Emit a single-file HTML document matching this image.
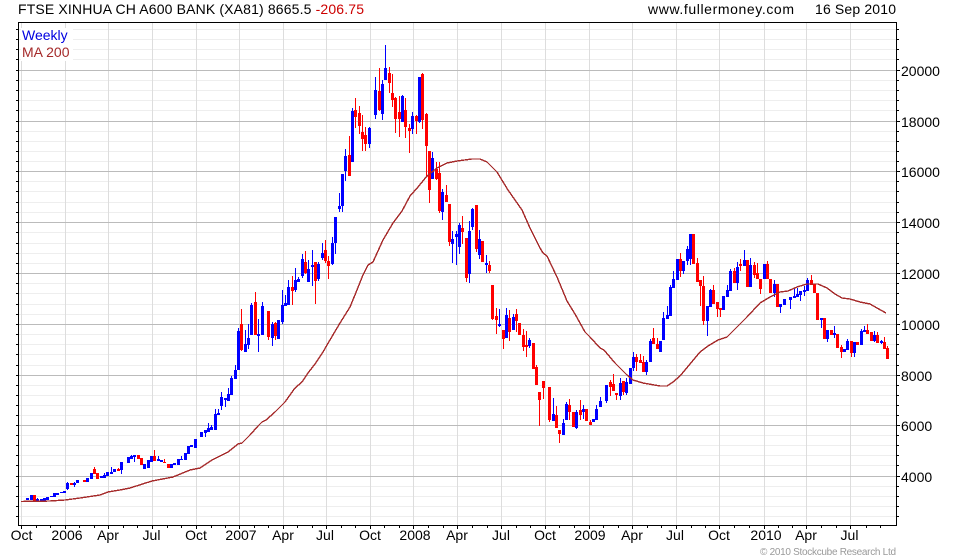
<!DOCTYPE html>
<html><head><meta charset="utf-8"><title>FTSE XINHUA CH A600 BANK</title>
<style>
html,body{margin:0;padding:0;background:#fff}
svg{display:block}
text{font-family:"Liberation Sans",Arial,sans-serif;font-size:14px;fill:#000}
.c{text-anchor:middle}
</style></head><body>
<svg xmlns="http://www.w3.org/2000/svg" width="980" height="560" viewBox="0 0 980 560">
<rect width="980" height="560" fill="#fff"/>
<g shape-rendering="crispEdges" fill="none">
<path stroke="#eee" d="M19 29.5H896M19 39.5H896M19 49.5H896M19 59.5H896M19 80.5H896M19 90.5H896M19 100.5H896M19 110.5H896M19 131.5H896M19 141.5H896M19 151.5H896M19 161.5H896M19 181.5H896M19 191.5H896M19 202.5H896M19 212.5H896M19 232.5H896M19 243.5H896M19 253.5H896M19 263.5H896M19 283.5H896M19 293.5H896M19 304.5H896M19 314.5H896M19 334.5H896M19 344.5H896M19 354.5H896M19 365.5H896M19 385.5H896M19 395.5H896M19 405.5H896M19 415.5H896M19 435.5H896M19 445.5H896M19 455.5H896M19 465.5H896M19 486.5H896M19 496.5H896M19 506.5H896M19 516.5H896"/>
<path stroke="#ddd" d="M21.5 23V525M65.5 23V525M108.5 23V525M152.5 23V525M196.5 23V525M239.5 23V525M283.5 23V525M326.5 23V525M370.5 23V525M413.5 23V525M457.5 23V525M501.5 23V525M545.5 23V525M589.5 23V525M632.5 23V525M676.5 23V525M719.5 23V525M764.5 23V525M806.5 23V525M850.5 23V525"/>
<path stroke="#bbb" d="M19 70.5H896M19 121.5H896M19 171.5H896M19 222.5H896M19 273.5H896M19 324.5H896M19 375.5H896M19 425.5H896M19 476.5H896"/>
<rect x="21" y="28" width="52" height="33" fill="#fff"/>
<path stroke="#000" d="M18 22.5H897M18.5 22V526M896.5 22V526M18 525.5H897"/>
<path stroke="#000" d="M16 29.5H18M16 39.5H18M16 49.5H18M16 59.5H18M16 70.5H18M16 80.5H18M16 90.5H18M16 100.5H18M16 110.5H18M16 121.5H18M16 131.5H18M16 141.5H18M16 151.5H18M16 161.5H18M16 171.5H18M16 181.5H18M16 191.5H18M16 202.5H18M16 212.5H18M16 222.5H18M16 232.5H18M16 243.5H18M16 253.5H18M16 263.5H18M16 273.5H18M16 283.5H18M16 293.5H18M16 304.5H18M16 314.5H18M16 324.5H18M16 334.5H18M16 344.5H18M16 354.5H18M16 365.5H18M16 375.5H18M16 385.5H18M16 395.5H18M16 405.5H18M16 415.5H18M16 425.5H18M16 435.5H18M16 445.5H18M16 455.5H18M16 465.5H18M16 476.5H18M16 486.5H18M16 496.5H18M16 506.5H18M16 516.5H18"/>
<path stroke="#000" d="M897 29.5H899M897 39.5H899M897 49.5H899M897 59.5H899M897 70.5H900M897 80.5H899M897 90.5H899M897 100.5H899M897 110.5H899M897 121.5H900M897 131.5H899M897 141.5H899M897 151.5H899M897 161.5H899M897 171.5H900M897 181.5H899M897 191.5H899M897 202.5H899M897 212.5H899M897 222.5H900M897 232.5H899M897 243.5H899M897 253.5H899M897 263.5H899M897 273.5H900M897 283.5H899M897 293.5H899M897 304.5H899M897 314.5H899M897 324.5H900M897 334.5H899M897 344.5H899M897 354.5H899M897 365.5H899M897 375.5H900M897 385.5H899M897 395.5H899M897 405.5H899M897 415.5H899M897 425.5H900M897 435.5H899M897 445.5H899M897 455.5H899M897 465.5H899M897 476.5H900M897 486.5H899M897 496.5H899M897 506.5H899M897 516.5H899"/>
<path stroke="#000" d="M21.5 526V529M65.5 526V529M108.5 526V529M152.5 526V529M196.5 526V529M239.5 526V529M283.5 526V529M326.5 526V529M370.5 526V529M413.5 526V529M457.5 526V529M501.5 526V529M545.5 526V529M589.5 526V529M632.5 526V529M676.5 526V529M719.5 526V529M764.5 526V529M806.5 526V529M850.5 526V529M36.5 526V528M50.5 526V528M79.5 526V528M94.5 526V528M123.5 526V528M137.5 526V528M167.5 526V528M181.5 526V528M211.5 526V528M225.5 526V528M254.5 526V528M268.5 526V528M297.5 526V528M312.5 526V528M341.5 526V528M355.5 526V528M384.5 526V528M399.5 526V528M428.5 526V528M443.5 526V528M472.5 526V528M487.5 526V528M516.5 526V528M530.5 526V528M559.5 526V528M574.5 526V528M603.5 526V528M618.5 526V528M647.5 526V528M661.5 526V528M691.5 526V528M705.5 526V528M734.5 526V528M749.5 526V528M778.5 526V528M792.5 526V528M821.5 526V528M836.5 526V528M866.5 526V528M880.5 526V528"/>
<!-- blue wicks -->
<path stroke="#00f" d="M37.5 498V501M67.5 482V490M74.5 482V487M104.5 473V478M111.5 467V474M121.5 462V474M131.5 455V459M134.5 455V462M158.5 456V461M181.5 456V460M205.5 430V437M208.5 423V432M211.5 425V430M215.5 409V430M218.5 409V415M221.5 392V410M225.5 398V407M228.5 388V401M231.5 376V395M235.5 365V379M238.5 328V370M245.5 330V352M248.5 324V349M251.5 303V335M258.5 319V352M262.5 302V335M272.5 322V346M282.5 290V324M285.5 295V306M288.5 280V305M295.5 268V292M298.5 277V282M302.5 254V278M308.5 260V282M312.5 250V286M318.5 262V281M322.5 243V260M332.5 237V265M335.5 217V254M339.5 193V212M342.5 174V212M345.5 149V181M352.5 108V162M369.5 127V148M375.5 77V119M382.5 80V120M385.5 45V80M402.5 95V122M412.5 112V134M419.5 77V123M432.5 152V179M442.5 189V220M452.5 231V263M456.5 231V265M459.5 223V254M469.5 221V283M472.5 208V230M479.5 230V259M486.5 255V273M499.5 309V327M506.5 308V338M513.5 314V330M529.5 338V348M553.5 398V421M563.5 419V435M566.5 402V420M576.5 410V429M583.5 405V419M596.5 405V420M600.5 397V407M606.5 385V403M620.5 378V400M626.5 378V395M633.5 352V371M646.5 360V375M650.5 339V362M663.5 312V340M667.5 306V319M670.5 285V316M673.5 271V288M683.5 261V274M687.5 246V265M690.5 234V265M707.5 306V336M710.5 289V307M727.5 285V297M730.5 269V291M737.5 262V290M744.5 250V266M750.5 258V287M774.5 280V297M780.5 304V313M790.5 297V309M794.5 289V298M797.5 288V297M800.5 291V301M804.5 286V296M807.5 278V291M821.5 318V328M827.5 330V342M834.5 326V338M847.5 339V350M854.5 342V357M861.5 329V345M864.5 326V332M874.5 331V342M881.5 340V344"/>
<!-- blue bodies -->
<path stroke="#00f" stroke-width="3" d="M27.5 498V500M31.5 495V500M37.5 499V501M41.5 499V501M44.5 498V501M47.5 497V500M51.5 496V497M54.5 493V497M57.5 493V495M61.5 492V493M64.5 491V493M67.5 483V489M74.5 483V485M77.5 480V483M87.5 478V482M91.5 473V479M101.5 476V478M104.5 475V478M107.5 472V476M111.5 472V474M114.5 469V472M121.5 462V470M128.5 457V463M131.5 456V459M134.5 455V457M144.5 464V469M148.5 460V468M151.5 456V462M158.5 459V461M161.5 460V462M171.5 464V468M174.5 463V465M178.5 459V465M181.5 459V460M185.5 453V460M188.5 446V454M191.5 445V447M195.5 439V448M201.5 432V437M205.5 430V433M208.5 428V432M211.5 427V430M215.5 414V430M218.5 413V415M221.5 397V406M225.5 398V400M228.5 394V401M231.5 378V395M235.5 370V379M238.5 331V370M245.5 344V352M248.5 338V345M251.5 305V335M258.5 334V336M262.5 306V335M272.5 324V338M278.5 320V339M282.5 305V322M285.5 303V306M288.5 287V305M295.5 280V290M298.5 279V282M302.5 259V276M308.5 269V282M312.5 265V267M318.5 264V279M322.5 253V258M332.5 243V264M335.5 217V243M339.5 206V209M342.5 174V206M345.5 156V171M352.5 111V162M369.5 128V144M375.5 90V115M382.5 84V114M385.5 68V80M402.5 96V122M412.5 116V129M419.5 77V122M432.5 158V179M442.5 192V212M452.5 239V244M456.5 234V237M459.5 225V247M469.5 231V274M472.5 209V227M479.5 239V255M486.5 263V265M499.5 324V326M506.5 315V338M513.5 317V330M529.5 340V346M553.5 414V421M563.5 423V435M566.5 404V420M576.5 412V428M583.5 409V412M593.5 419V422M596.5 409V420M600.5 401V407M606.5 385V401M620.5 383V396M626.5 382V393M630.5 368V384M633.5 357V368M646.5 362V372M650.5 341V362M660.5 341V352M663.5 318V340M667.5 315V319M670.5 287V316M673.5 279V288M677.5 259V280M683.5 261V271M687.5 249V261M690.5 234V259M707.5 306V321M710.5 290V307M723.5 296V310M727.5 290V297M730.5 271V291M737.5 267V283M744.5 260V266M750.5 265V287M764.5 264V279M774.5 284V293M780.5 304V307M784.5 299V305M790.5 297V300M794.5 296V298M797.5 294V297M800.5 291V295M804.5 290V292M807.5 280V291M821.5 318V320M827.5 330V339M834.5 333V335M844.5 349V352M847.5 341V350M854.5 342V353M861.5 331V345M864.5 330V332M874.5 335V341M881.5 341V343"/>
<!-- red wicks -->
<path stroke="#f00" d="M94.5 467V474M118.5 468V471M154.5 450V461M164.5 459V463M241.5 309V351M255.5 292V335M268.5 311V340M275.5 322V340M292.5 276V305M305.5 251V274M315.5 262V304M325.5 240V263M328.5 256V279M349.5 136V176M355.5 98V128M359.5 106V134M362.5 115V151M365.5 127V151M379.5 68V111M389.5 67V93M392.5 74V107M395.5 97V133M399.5 96V137M405.5 98V138M409.5 124V153M416.5 115V134M422.5 73V129M426.5 113V176M429.5 151V203M436.5 162V180M439.5 162V213M446.5 185V202M449.5 204V246M462.5 216V244M466.5 238V282M476.5 205V252M489.5 261V273M492.5 285V320M496.5 308V334M503.5 330V349M509.5 310V341M516.5 309V332M523.5 329V351M526.5 331V357M536.5 365V385M539.5 392V426M543.5 381V399M549.5 387V422M556.5 406V428M559.5 430V443M569.5 399V420M580.5 400V420M590.5 420V425M610.5 380V396M613.5 374V391M616.5 393V400M623.5 381V395M636.5 354V371M640.5 354V363M643.5 356V372M653.5 328V344M657.5 338V349M680.5 253V277M697.5 258V282M700.5 280V306M703.5 276V325M713.5 285V304M717.5 302V317M720.5 308V317M734.5 268V283M740.5 259V271M754.5 262V278M757.5 263V279M760.5 279V294M767.5 261V279M811.5 275V285M841.5 345V358M851.5 341V357M867.5 324V334M877.5 332V343M884.5 337V349M887.5 346V359"/>
<!-- red bodies -->
<path stroke="#f00" stroke-width="3" d="M34.5 495V501M71.5 483V485M84.5 480V482M94.5 469V474M97.5 473V479M118.5 469V471M138.5 455V459M141.5 458V465M154.5 456V461M164.5 462V463M168.5 464V468M241.5 324V350M255.5 302V335M268.5 311V337M275.5 323V336M292.5 287V291M305.5 262V273M315.5 262V281M325.5 250V261M328.5 261V266M349.5 155V176M355.5 110V117M359.5 113V126M362.5 132V139M365.5 135V144M379.5 91V110M389.5 73V83M392.5 93V100M395.5 98V119M399.5 112V119M405.5 110V127M409.5 128V131M416.5 116V121M422.5 74V120M426.5 114V146M429.5 151V190M436.5 169V179M439.5 173V211M446.5 195V202M449.5 204V242M462.5 228V232M466.5 238V278M476.5 205V249M482.5 241V262M489.5 265V271M492.5 285V319M496.5 316V320M503.5 330V339M509.5 318V332M516.5 314V321M519.5 323V335M523.5 335V347M526.5 345V347M533.5 343V369M536.5 367V385M539.5 392V400M543.5 381V388M549.5 387V420M556.5 415V428M559.5 430V434M569.5 405V412M573.5 412V427M580.5 410V415M586.5 409V421M590.5 422V425M610.5 382V387M613.5 384V391M616.5 393V395M623.5 381V392M636.5 357V362M640.5 360V363M643.5 362V372M653.5 338V344M657.5 344V349M680.5 259V271M693.5 234V264M697.5 263V282M700.5 280V286M703.5 286V321M713.5 290V304M717.5 302V309M720.5 308V310M734.5 271V283M740.5 264V266M747.5 260V287M754.5 265V275M757.5 273V279M760.5 279V289M767.5 264V279M770.5 279V293M777.5 284V307M811.5 280V285M814.5 284V293M817.5 293V320M824.5 318V339M831.5 330V335M837.5 334V348M841.5 347V352M851.5 341V353M857.5 342V345M867.5 330V334M871.5 332V341M877.5 335V343M884.5 342V349M887.5 348V359"/>
<!-- moving average -->
<polyline stroke="#a52a2a" stroke-width="1.4" stroke-linejoin="round" points="21,501.5 50,501 65,500 80,498 100,495 108,492 120,490 130,488 152,481 173,477 190,470 200,468 212,460 228,452 238,444 242,443 250,435 258,426 262,422 266,420 275,412 285,402 290,395 295,388 302,382 308,373 315,364 323,352 327,345 340,323 350,307 357,290 363,275 368,265 373,262 383,240 393,223 402,211 410,196 418,187 427,176 437,168 447,163 457,161 472,159 480,159 487,162 497,172 508,190 522,210 530,228 540,248 543,253 547,256 557,277 567,301 575,314 585,332 590,337 600,348 604,350 615,363 627,375 633,380 643,383 660,386 667,386 673,382 680,376 690,364 700,352 708,346 718,340 727,337 737,327 747,317 760,303 770,297 780,292 788,291 797,287 807,284 818,284 827,288 835,294 842,298 850,299 860,302 870,304 877,308 886,313"/>
</g>
<text x="18" y="14" textLength="346" lengthAdjust="spacing">FTSE XINHUA CH A600 BANK (XA81) 8665.5 <tspan fill="#cc0000">-206.75</tspan></text>
<text x="648" y="14" textLength="146" lengthAdjust="spacing">www.fullermoney.com</text>
<text x="815" y="14" textLength="81" lengthAdjust="spacing">16 Sep 2010</text>
<text x="22" y="40" style="fill:#0000e0">Weekly</text>
<text x="22" y="57" style="fill:#a52a2a">MA 200</text>
<text x="901" y="76">20000</text>
<text x="901" y="127">18000</text>
<text x="901" y="177">16000</text>
<text x="901" y="228">14000</text>
<text x="901" y="279">12000</text>
<text x="901" y="330">10000</text>
<text x="901" y="381">8000</text>
<text x="901" y="431">6000</text>
<text x="901" y="482">4000</text>
<text class="c" x="21.5" y="540">Oct</text>
<text class="c" x="67" y="540">2006</text>
<text class="c" x="108" y="540">Apr</text>
<text class="c" x="151.5" y="540">Jul</text>
<text class="c" x="196" y="540">Oct</text>
<text class="c" x="241" y="540">2007</text>
<text class="c" x="283" y="540">Apr</text>
<text class="c" x="325" y="540">Jul</text>
<text class="c" x="370" y="540">Oct</text>
<text class="c" x="415" y="540">2008</text>
<text class="c" x="457" y="540">Apr</text>
<text class="c" x="501" y="540">Jul</text>
<text class="c" x="545" y="540">Oct</text>
<text class="c" x="590" y="540">2009</text>
<text class="c" x="632" y="540">Apr</text>
<text class="c" x="675" y="540">Jul</text>
<text class="c" x="719" y="540">Oct</text>
<text class="c" x="766" y="540">2010</text>
<text class="c" x="806" y="540">Apr</text>
<text class="c" x="849.5" y="540">Jul</text>
<text x="760" y="555" textLength="136" lengthAdjust="spacing" style="font-size:10px;fill:#999">© 2010 Stockcube Research Ltd</text>
</svg>
</body></html>
